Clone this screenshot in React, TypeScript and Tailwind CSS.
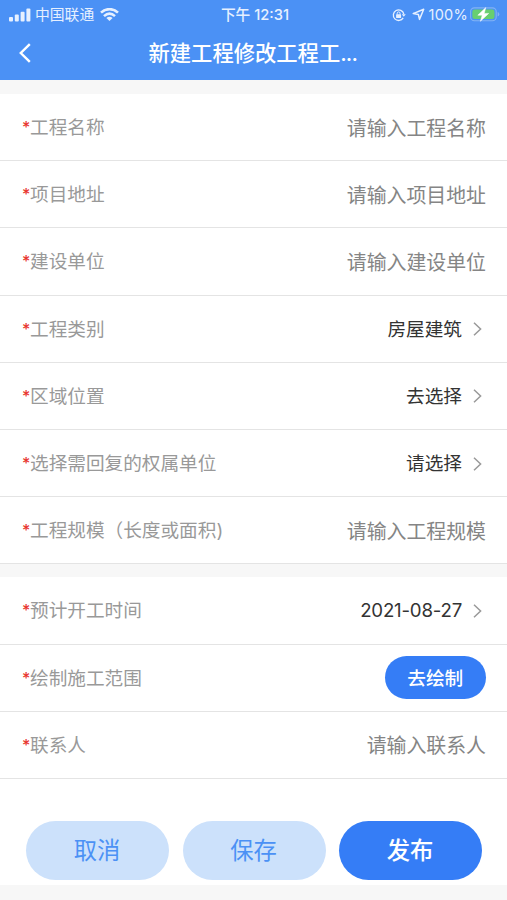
import type { ReactNode } from "react";

function StatusBar() {
  return (
    <div className="grid h-7 grid-cols-3 items-center pr-[7px] pl-[9px] text-[14px] leading-7 text-[#e6f0ff]">
      <div className="flex items-center">
        <svg width="22" height="14" viewBox="0 0 22 14" fill="currentColor">
          <rect x="0" y="9" width="4" height="4.5" rx="1" />
          <rect x="5.8" y="6.5" width="4" height="7" rx="1" />
          <rect x="11.6" y="3.7" width="4" height="9.8" rx="1" />
          <rect x="17.4" y="0.5" width="4" height="13" rx="1" />
        </svg>
        <span className="ml-1 pt-px text-[14.8px] whitespace-nowrap">中国联通</span>
        <svg
          className="ml-[6px]"
          width="19"
          height="14"
          viewBox="0 0 19 14"
          fill="none"
          stroke="currentColor"
          strokeWidth="2.6"
        >
          <path d="M1 4.6C5.8 0 13.2 0 18 4.6" />
          <path d="M4 8.1C7.4 5 11.6 5 15 8.1" />
          <path d="M6.4 10C8.4 8.4 10.6 8.4 12.6 10L9.5 13.1Z" fill="currentColor" stroke="none" />
        </svg>
      </div>
      <div className="pl-px text-center text-[14.7px] font-medium whitespace-nowrap">下午 12:31</div>
      <div className="flex items-center justify-end">
        <svg width="14" height="14" viewBox="0 0 14 14" fill="none" stroke="currentColor">
          <path d="M11.2 9.9A5.3 5.3 0 1 1 11.8 6" strokeWidth="1.3" />
          <path d="M9.8 6.2h4l-2 2.6Z" fill="currentColor" stroke="none" />
          <rect x="4.1" y="6.3" width="5" height="3.8" rx="0.6" fill="currentColor" stroke="none" />
          <path d="M5.2 6.5V5.3a1.4 1.4 0 0 1 2.8 0v1.2" strokeWidth="1" />
        </svg>
        <svg
          className="ml-[6px]"
          width="13"
          height="13"
          viewBox="0 0 13 13"
          fill="none"
          stroke="currentColor"
          strokeWidth="1.5"
          strokeLinejoin="round"
        >
          <path d="M1.2 5.6L11.7 1.2L7.5 11.4L6.4 6.5Z" />
        </svg>
        <span className="ml-[4px] text-[14.5px] tracking-[0.25px]">100%</span>
        <svg className="ml-[2px]" width="30" height="15" viewBox="0 0 30 15" fill="none">
          <rect x="0.6" y="0.9" width="25.6" height="12.8" rx="3.8" stroke="#83b3f4" strokeWidth="1.1" />
          <rect x="2.3" y="2.5" width="22.2" height="9.6" rx="2.4" fill="#68cf70" />
          <path d="M27.6 5v4.6q1.7-.6 1.7-2.3T27.6 5Z" fill="#83b3f4" />
          <path
            d="M15.8.6L7.8 8.2h4.4L10.4 14.3L18.7 6.4h-4.5Z"
            fill="white"
            stroke="white"
            strokeWidth="0.5"
          />
        </svg>
      </div>
    </div>
  );
}

function Row({ label, children }: { label: string; children: ReactNode }) {
  return (
    <div className="flex h-[67.2px] items-center justify-between border-b-[1.5px] border-[#e4e4e4] bg-white pt-px pr-[21px] pl-[22px]">
      <div className="flex items-center pt-px text-[18.65px] whitespace-nowrap text-[#999999]">
        <span className="w-2 pb-[2px] text-[16px] font-medium text-[#e8352e]">*</span>
        <span>{label}</span>
      </div>
      {children}
    </div>
  );
}

function Placeholder({ text }: { text: string }) {
  return <div className="pt-1 text-[19.9px] whitespace-nowrap text-[#858585]">{text}</div>;
}

function Picker({ value }: { value: string }) {
  return (
    <div className="flex items-center pr-1 text-[18.65px] text-[#333333]">
      <span className="pt-px">{value}</span>
      <svg
        className="ml-[11px]"
        width="9"
        height="14"
        viewBox="0 0 9 14"
        fill="none"
        stroke="#999999"
        strokeWidth="1.5"
      >
        <path d="M1 0.8L7.6 7L1 13.2" />
      </svg>
    </div>
  );
}

export default function App() {
  return (
    <div className="flex h-[900px] w-[507px] flex-col overflow-hidden bg-[#f7f7f7] font-['Inter','Noto_Sans_CJK_SC',sans-serif]">
      <header className="h-20 shrink-0 bg-[#4b91f5]">
        <StatusBar />
        <div className="grid h-[50px] grid-cols-[148.5px_1fr_149px] items-center text-white">
          <svg
            className="ml-[18px]"
            width="14"
            height="20"
            viewBox="0 0 14 20"
            fill="none"
            stroke="currentColor"
            strokeWidth="2.4"
          >
            <path d="M11.8 1.2L2.8 10L11.8 18.8" />
          </svg>
          <h1 className="pt-px text-[21.3px] font-medium whitespace-nowrap">
            新建工程修改工程工<span className="tracking-[-0.8px]">...</span>
          </h1>
        </div>
      </header>

      <section className="mt-[14px]">
        <Row label="工程名称">
          <Placeholder text="请输入工程名称" />
        </Row>
        <Row label="项目地址">
          <Placeholder text="请输入项目地址" />
        </Row>
        <Row label="建设单位">
          <Placeholder text="请输入建设单位" />
        </Row>
        <Row label="工程类别">
          <Picker value="房屋建筑" />
        </Row>
        <Row label="区域位置">
          <Picker value="去选择" />
        </Row>
        <Row label="选择需回复的权属单位">
          <Picker value="请选择" />
        </Row>
        <Row label="工程规模（长度或面积)">
          <Placeholder text="请输入工程规模" />
        </Row>
      </section>

      <section className="mt-[13px]">
        <Row label="预计开工时间">
          <div className="tracking-[-0.2px]">
            <Picker value="2021-08-27" />
          </div>
        </Row>
        <Row label="绘制施工范围">
          <button className="mb-px h-[43px] w-[101.5px] rounded-full bg-[#357df6] pt-[2px] text-[18.65px] font-medium text-white">
            去绘制
          </button>
        </Row>
        <Row label="联系人">
          <Placeholder text="请输入联系人" />
        </Row>
      </section>

      <footer className="flex h-[106px] items-end gap-[13.5px] bg-white pb-[5px] pl-[26px] text-[23.3px]">
        <button className="h-[58.5px] w-[143px] rounded-full bg-[#cce1fb] pt-[2px] pr-px text-[#4b91f5]">取消</button>
        <button className="h-[58.5px] w-[143px] rounded-full bg-[#cce1fb] pt-[2px] pr-px text-[#4b91f5]">保存</button>
        <button className="h-[58.5px] w-[143px] rounded-full bg-[#357df6] pt-[2px] pr-px font-medium text-white">
          发布
        </button>
      </footer>
    </div>
  );
}
